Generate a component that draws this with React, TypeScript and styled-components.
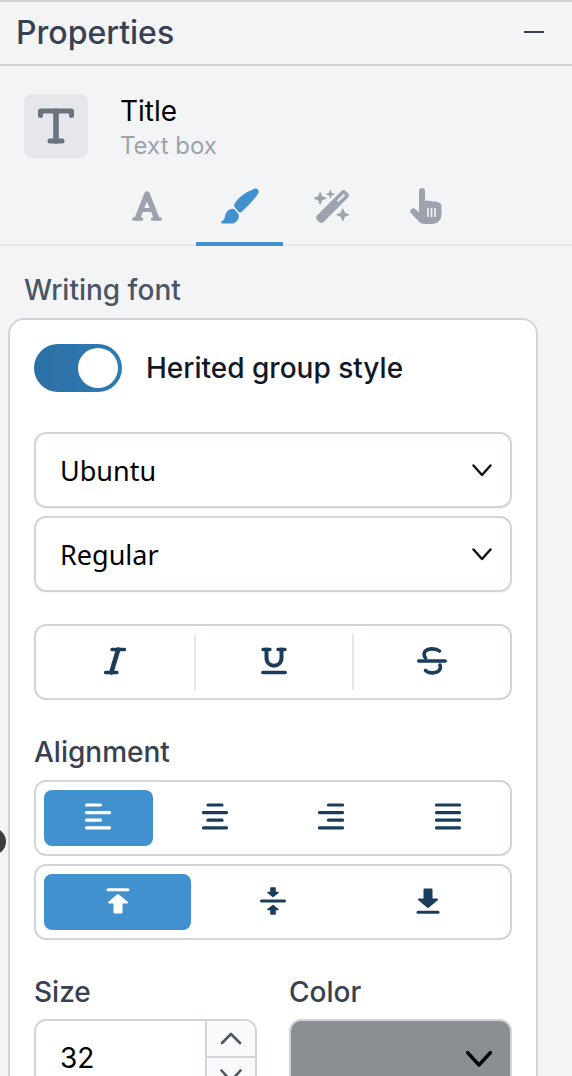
import React from "react";
import styled, { createGlobalStyle } from "styled-components";
import { FaWandMagicSparkles } from "react-icons/fa6";

const Global = createGlobalStyle`
  html, body { margin: 0; padding: 0; height: 1076px; overflow: hidden; background: #f3f4f6; }
  body { font-family: Inter, "Liberation Sans", sans-serif; }
  * { box-sizing: border-box; }
`;

const Panel = styled.div`
  position: relative;
  width: 572px;
  height: 1076px;
  overflow: hidden;
  border-top: 2px solid #d1d5db;
`;
const Header = styled.div`
  height: 64px;
  display: flex;
  align-items: center;
  justify-content: space-between;
  padding: 0 28px 2px 16px;
  border-bottom: 2px solid #d1d5db;
`;
const PanelTitle = styled.div`
  font-size: 32px;
  font-weight: 500;
  color: #374151;
`;
const Minus = styled.div`
  width: 20px;
  height: 2px;
  background: #374151;
`;
const Item = styled.div`
  display: flex;
  align-items: flex-start;
  gap: 32px;
  height: 68px;
  margin-top: 28px;
  padding: 0 24px;
`;
const IconBox = styled.div`
  width: 64px;
  height: 64px;
  border-radius: 8px;
  background: #e5e7eb;
  display: flex;
  align-items: center;
  justify-content: center;
`;
const ItemText = styled.div`
  display: flex;
  flex-direction: column;
  gap: 1px;
`;
const ItemName = styled.div`
  font-size: 28px;
  line-height: 34px;
  color: #000;
`;
const ItemKind = styled.div`
  font-size: 24px;
  line-height: 34px;
  color: #9ca3af;
`;
const Tabs = styled.div`
  display: flex;
  justify-content: center;
  gap: 6px;
  height: 78px;
  margin-top: 6px;
  padding-top: 2px;
  border-bottom: 2px solid #e5e7eb;
`;
const Tab = styled.div<{ $active?: boolean }>`
  width: 87px;
  height: 76px;
  padding: 2px 0;
  display: flex;
  align-items: center;
  justify-content: center;
  color: ${(p) => (p.$active ? "#4191cf" : "#9ca3af")};
  border-bottom: 4px solid ${(p) => (p.$active ? "#4191cf" : "transparent")};
`;
const SectionTitle = styled.div`
  font-size: 28px;
  line-height: 34px;
  font-weight: 500;
  color: #4b5563;
  padding: 27px 24px 0;
`;
const Card = styled.div`
  margin: 11px 0 0 8px;
  width: 530px;
  height: 900px;
  background: #fff;
  border: 2px solid #d1d5db;
  border-radius: 16px;
  padding: 24px 24px 0;
`;
const ToggleRow = styled.div`
  display: flex;
  align-items: center;
  gap: 24px;
  margin-bottom: 40px;
`;
const Toggle = styled.div`
  width: 88px;
  height: 48px;
  border-radius: 24px;
  padding: 4px;
  display: flex;
  justify-content: flex-end;
  background: linear-gradient(90deg, #2b70a6, #2f7ab3);
`;
const Knob = styled.div`
  width: 40px;
  height: 40px;
  border-radius: 50%;
  background: #fff;
`;
const ToggleLabel = styled.div`
  font-size: 28px;
  font-weight: 500;
  color: #111827;
`;
const Select = styled.div`
  height: 76px;
  margin-bottom: 8px;
  border: 2px solid #d1d5db;
  border-radius: 12px;
  background: #fff;
  box-shadow: 0 1px 2px rgba(0, 0, 0, 0.05);
  display: flex;
  align-items: center;
  justify-content: space-between;
  padding: 0 18px 0 24px;
  font-family: "Noto Sans", sans-serif;
  font-size: 27px;
  color: #000;
`;
const StyleGroup = styled.div`
  height: 76px;
  margin-top: 32px;
  border: 2px solid #d1d5db;
  border-radius: 12px;
  display: grid;
  grid-template-columns: repeat(3, 1fr);
  align-items: center;
`;
const StyleCell = styled.div<{ $divider?: boolean }>`
  height: 56px;
  padding-bottom: 3px;
  display: flex;
  align-items: center;
  justify-content: center;
  border-left: ${(p) => (p.$divider ? "2px solid #e5e7eb" : "none")};
`;
const Label = styled.div`
  font-size: 28px;
  line-height: 34px;
  font-weight: 500;
  color: #374151;
`;
const AlignLabel = styled(Label)`
  margin: 35px 0 11px;
`;
const Segments = styled.div<{ $cols: number }>`
  height: 76px;
  margin-bottom: 8px;
  border: 2px solid #d1d5db;
  border-radius: 12px;
  padding: 8px;
  display: grid;
  grid-template-columns: repeat(${(p) => p.$cols}, 1fr);
  gap: 8px;
`;
const Segment = styled.div<{ $active?: boolean }>`
  border-radius: 8px;
  padding-bottom: 3px;
  display: flex;
  align-items: center;
  justify-content: center;
  background: ${(p) => (p.$active ? "#4191cf" : "transparent")};
  color: ${(p) => (p.$active ? "#fff" : "#1a3d5c")};
`;
const Fields = styled.div`
  display: grid;
  grid-template-columns: 223px 223px;
  gap: 32px;
  margin-top: 35px;
`;
const FieldLabel = styled(Label)`
  margin-bottom: 10px;
`;
const NumberBox = styled.div`
  height: 76px;
  border: 2px solid #d1d5db;
  border-radius: 12px;
  display: flex;
  overflow: hidden;
`;
const NumberValue = styled.div`
  flex: 1;
  display: flex;
  align-items: center;
  padding: 1px 0 0 24px;
  font-size: 28px;
  color: #000;
`;
const Stepper = styled.div`
  width: 50px;
  border-left: 2px solid #d1d5db;
  display: flex;
  flex-direction: column;
`;
const Step = styled.div<{ $first?: boolean }>`
  flex: 1;
  display: flex;
  align-items: center;
  justify-content: center;
  background: #f9fafb;
  border-bottom: ${(p) => (p.$first ? "2px solid #d1d5db" : "none")};
`;
const Swatch = styled.div`
  height: 76px;
  border: 2px solid #d1d5db;
  border-radius: 12px;
  background: #8b8f92;
  display: flex;
  align-items: center;
  justify-content: flex-end;
  padding: 4px 18px 0 0;
`;
const Handle = styled.div`
  position: absolute;
  left: -21px;
  top: 826px;
  width: 27px;
  height: 27px;
  border-radius: 50%;
  background: #3d3d3d;
`;

const Chevron = ({ w = 20, h = 11, sw = 2.4, c = "#111" }: { w?: number; h?: number; sw?: number; c?: string }) => (
  <svg width={w} height={h + 2} viewBox={`0 0 ${w} ${h + 2}`} fill="none" stroke={c} strokeWidth={sw} strokeLinecap="round" strokeLinejoin="round">
    <path d={`M1.5 1.5 L${w / 2} ${h} L${w - 1.5} 1.5`} />
  </svg>
);
const ChevronUp = ({ c = "#4b5563" }: { c?: string }) => (
  <svg width="22" height="13" viewBox="0 0 22 13" fill="none" stroke={c} strokeWidth="2.6" strokeLinecap="round" strokeLinejoin="round">
    <path d="M2 11 L11 2 L20 11" />
  </svg>
);
const TextIcon = () => (
  <svg width="36" height="36" viewBox="0 0 36 36" fill="none" stroke="#6b7280" strokeWidth="5" strokeLinecap="round" strokeLinejoin="round">
    <path d="M2.5 7.5 V3 H33.5 V7.5" />
    <path d="M18 3 V33" strokeWidth="5.6" />
    <path d="M12 33 H24" />
  </svg>
);
const FontIcon = () => (
  <svg width="30" height="30" viewBox="0 0 30 30" fill="none" stroke="currentColor" strokeLinecap="round" strokeLinejoin="round">
    <path d="M15 3 L5.5 27 M15 3 L24.5 27" strokeWidth="5.5" />
    <path d="M9 19 H21" strokeWidth="4" />
    <path d="M1.8 28 H9.5 M20.5 28 H28.2" strokeWidth="3.6" />
  </svg>
);
const BrushIcon = () => (
  <svg width="38" height="36" viewBox="0 0 38 36" fill="currentColor">
    <path d="M33.5 0.8 C36 -0.2 38.5 2.5 37.4 5 C34 11 26 19 20.5 24 C19.5 24.8 18.3 24.5 17.5 23.8 L13.8 19.5 C12.8 18 13 16.5 14 15 C18 9 26 3.5 33.5 0.8 Z" />
    <path d="M10.5 21 C12 20.5 13 21 13.8 21.8 L17 25.5 C18 27 18 28.5 17.5 30 C16.5 33.5 13.5 35.5 10 35.5 H1.5 C0 35.5 -0.2 33.5 1 33 C3 32 3.5 30.5 4 28.5 C4.8 24.5 7 21.5 10.5 21 Z" />
  </svg>
);
const HandIcon = () => (
  <svg width="32" height="36" viewBox="0 0 32 36" fill="currentColor">
    <path d="M9 3 C9 1.2 10.4 0 12 0 C13.6 0 15 1.2 15 3 V13.2 C16 12.4 17.8 12.4 18.8 13.2 C19.8 12.4 21.6 12.6 22.6 13.8 C24 13 26 13.2 27.2 14.2 C29.2 14 31.5 15.6 31.5 18 V26 C31.5 32 27.6 36 21.5 36 H15 C12.2 36 10.2 34.8 8.4 33 L1.2 25.4 C0 24.2 0 22.4 1.2 21.2 C2.4 20 4.2 20 5.4 21.2 L9 24.5 Z" />
    <path d="M18 20 V29 M21.5 20 V29 M25 20 V29" stroke="#f3f4f6" strokeWidth="1.6" fill="none" />
  </svg>
);
const ItalicIcon = () => (
  <svg width="24" height="28" viewBox="0 0 24 28" fill="none" stroke="#1a3d5c" strokeLinecap="round" strokeLinejoin="round">
    <path d="M9 2.5 H21.5 M2.5 25.5 H14" strokeWidth="3.4" />
    <path d="M15.2 2.5 L8.3 25.5" strokeWidth="4.6" />
  </svg>
);
const UnderlineIcon = () => (
  <svg width="26" height="28" viewBox="0 0 26 28" fill="none" stroke="#1a3d5c" strokeLinecap="round" strokeLinejoin="round">
    <path d="M2 2.5 H9 M17 2.5 H24" strokeWidth="3.4" />
    <path d="M5.5 2.5 V10.5 C5.5 21.5 20.5 21.5 20.5 10.5 V2.5" strokeWidth="4" />
    <path d="M1.8 25.5 H24.2" strokeWidth="3.4" />
  </svg>
);
const StrikeIcon = () => (
  <svg width="30" height="28" viewBox="0 0 30 28" fill="none" stroke="#1a3d5c" strokeLinecap="round" strokeLinejoin="round">
    <path d="M1.7 14 H28.3" strokeWidth="3.4" />
    <path d="M22.5 4 C19 1 10.5 1.2 8 4.5 C6.8 6.5 7 9 8.5 11" strokeWidth="3.6" />
    <path d="M8.5 23.5 C12 26.8 20 26.6 22.5 23 C23.6 21.2 23.6 19.5 23 18" strokeWidth="3.6" />
  </svg>
);
const AlignIcon = ({ kind }: { kind: "left" | "center" | "right" | "justify" }) => {
  const short = 17;
  const long = 26;
  const x = (w: number) => (kind === "left" || kind === "justify" ? 0 : kind === "center" ? (long - w) / 2 : long - w);
  const ws = kind === "justify" ? [long, long, long, long] : [short, long, short, long];
  return (
    <svg width="26" height="27" viewBox="0 0 26 27" stroke="currentColor" strokeWidth="3.2" strokeLinecap="round">
      {ws.map((w, i) => (
        <line key={i} x1={x(w) + 1.5} x2={x(w) + w - 1.5} y1={2 + i * 7.6} y2={2 + i * 7.6} />
      ))}
    </svg>
  );
};
const VTop = () => (
  <svg width="24" height="26" viewBox="0 0 24 26" fill="currentColor" stroke="currentColor" strokeLinecap="round" strokeLinejoin="round">
    <path d="M2 1.8 H22" strokeWidth="3" />
    <path d="M12 7 L3 14.5 H8.5 V24.5 H15.5 V14.5 H21 Z" strokeWidth="2" />
  </svg>
);
const VMiddle = () => (
  <svg width="26" height="30" viewBox="0 0 26 30" fill="currentColor" stroke="currentColor" strokeLinecap="round" strokeLinejoin="round">
    <path d="M1.5 15 H24.5" strokeWidth="3" fill="none" />
    <path d="M13 10.5 L8 6.5 H11 V2 H15 V6.5 H18 Z" strokeWidth="1.6" />
    <path d="M13 19.5 L8 23.5 H11 V28 H15 V23.5 H18 Z" strokeWidth="1.6" />
  </svg>
);
const VBottom = () => (
  <svg width="24" height="26" viewBox="0 0 24 26" fill="currentColor" stroke="currentColor" strokeLinecap="round" strokeLinejoin="round">
    <path d="M2 24.2 H22" strokeWidth="3" />
    <path d="M12 19 L3 11.5 H8.5 V1.5 H15.5 V11.5 H21 Z" strokeWidth="2" />
  </svg>
);

export default function App() {
  return (
    <>
      <Global />
      <Panel>
        <Header>
          <PanelTitle>Properties</PanelTitle>
          <Minus />
        </Header>
        <Item>
          <IconBox>
            <TextIcon />
          </IconBox>
          <ItemText>
            <ItemName>Title</ItemName>
            <ItemKind>Text box</ItemKind>
          </ItemText>
        </Item>
        <Tabs>
          <Tab>
            <FontIcon />
          </Tab>
          <Tab $active>
            <BrushIcon />
          </Tab>
          <Tab>
            <FaWandMagicSparkles size={37} />
          </Tab>
          <Tab>
            <HandIcon />
          </Tab>
        </Tabs>
        <SectionTitle>Writing font</SectionTitle>
        <Card>
          <ToggleRow>
            <Toggle>
              <Knob />
            </Toggle>
            <ToggleLabel>Herited group style</ToggleLabel>
          </ToggleRow>
          <Select>
            Ubuntu
            <Chevron />
          </Select>
          <Select>
            Regular
            <Chevron />
          </Select>
          <StyleGroup>
            <StyleCell>
              <ItalicIcon />
            </StyleCell>
            <StyleCell $divider>
              <UnderlineIcon />
            </StyleCell>
            <StyleCell $divider>
              <StrikeIcon />
            </StyleCell>
          </StyleGroup>
          <AlignLabel>Alignment</AlignLabel>
          <Segments $cols={4}>
            <Segment $active>
              <AlignIcon kind="left" />
            </Segment>
            <Segment>
              <AlignIcon kind="center" />
            </Segment>
            <Segment>
              <AlignIcon kind="right" />
            </Segment>
            <Segment>
              <AlignIcon kind="justify" />
            </Segment>
          </Segments>
          <Segments $cols={3}>
            <Segment $active>
              <VTop />
            </Segment>
            <Segment>
              <VMiddle />
            </Segment>
            <Segment>
              <VBottom />
            </Segment>
          </Segments>
          <Fields>
            <div>
              <FieldLabel>Size</FieldLabel>
              <NumberBox>
                <NumberValue>32</NumberValue>
                <Stepper>
                  <Step $first>
                    <ChevronUp />
                  </Step>
                  <Step>
                    <Chevron w={22} h={12} sw={2.6} c="#4b5563" />
                  </Step>
                </Stepper>
              </NumberBox>
            </div>
            <div>
              <FieldLabel>Color</FieldLabel>
              <Swatch>
                <Chevron w={26} h={14} sw={3.4} c="#000" />
              </Swatch>
            </div>
          </Fields>
        </Card>
        <Handle />
      </Panel>
    </>
  );
}
